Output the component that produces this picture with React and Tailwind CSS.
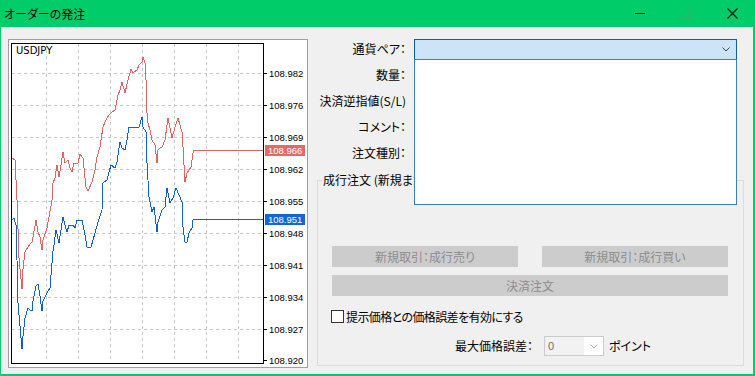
const red = "12,158 15,160 17,200 19,258 21,279 22,289 23,269 25,252 28,247 30,244 32,242 33,237 36,220 38,232 40,237 42,250 43,240 47,228 49,217 52,200 53,183 55,178 57,165 59,177 61,165 63,152 65,163 68,160 70,168 72,172 74,163 78,163 80,154 83,158 86,187 88,191 92,182 95,170 97,157 100,147 103,127 105,122 107,118 110,114 112,112 115,110 118,95 120,90 122,82 125,93 128,80 131,69 133,73 137,70 139,65 142,62 143,57 145,63 146,80 147,113 148,123 150,130 152,140 155,145 157,163 158,150 160,148 162,147 165,140 168,118 172,138 175,127 178,118 180,125 182,132 183,147 184,165 185,182 187,173 189,170 191,167 193,153 193,150 263,150";
const blue = "12,220 14,218 16,225 17,260 18,303 20,326 22,349 23,336 25,318 28,308 30,310 32,311 33,301 36,286 38,284 40,296 42,311 43,301 47,293 50,288 52,263 52,258 54,245 56,230 59,243 61,230 63,217 65,225 67,232 69,225 73,225 75,228 77,220 82,220 83,225 85,235 87,247 91,247 95,233 98,222 102,210 103,183 107,180 109,172 111,165 115,168 117,162 119,148 120,142 122,148 125,150 127,140 129,127 133,128 137,127 139,127 142,117 143,127 146,132 147,163 149,197 150,202 152,212 154,207 157,232 158,222 162,210 165,207 167,188 170,203 173,198 176,188 179,195 182,202 183,227 185,242 187,242 189,233 192,228 193,220 193,219 263,219";

const axis = [
  ["108.982", 73],
  ["108.976", 105],
  ["108.969", 137],
  ["108.962", 169],
  ["108.955", 201],
  ["108.948", 233],
  ["108.941", 265],
  ["108.934", 297],
  ["108.927", 329],
  ["108.920", 360],
];
const hGrid = [73, 105, 137, 169, 201, 233, 265, 297, 329];
const vGrid = [46, 78, 110, 142, 174, 206, 238];

function Chart() {
  return (
    <div className="mt-[3px] w-[300px] h-[329px] shrink-0 bg-white border border-[#a0a0a0]">
      <svg width="298" height="327" viewBox="9 40 298 327" className="block">
        {hGrid.map((y) => (
          <line key={"h" + y} x1="12" x2="262" y1={y + 0.5} y2={y + 0.5} stroke="#c8c8c8" strokeDasharray="3 3" strokeWidth="1" />
        ))}
        {vGrid.map((x) => (
          <line key={"v" + x} x1={x + 0.5} x2={x + 0.5} y1="44" y2="362" stroke="#c8c8c8" strokeDasharray="3 3" strokeWidth="1" />
        ))}
        <rect x="11.5" y="43.5" width="252" height="320" fill="none" stroke="#000" strokeWidth="1" />
        {axis.map(([t, y]) => (
          <line key={"t" + t} x1="264" x2="267" y1={y + 0.5} y2={y + 0.5} stroke="#000" strokeWidth="1" />
        ))}
        <polyline points={red} fill="none" stroke="#e06464" strokeWidth="1" shapeRendering="crispEdges" />
        <polyline points={blue} fill="none" stroke="#1060cc" strokeWidth="1" shapeRendering="crispEdges" />
        {axis.map(([t, y]) => (
          <text key={t} x="269" y={y + 3.5} fontSize="9.5" fontFamily="Liberation Sans, Arial, sans-serif" fill="#000">
            {t}
          </text>
        ))}
        <text x="16" y="54" fontSize="10" fontFamily="DejaVu Sans, sans-serif" fill="#000">USDJPY</text>
        <rect x="265" y="145" width="40" height="11" fill="#e46a6a" />
        <text x="268" y="153.5" fontSize="9.5" fontFamily="Liberation Sans, Arial, sans-serif" fill="#fff">108.966</text>
        <rect x="265" y="214" width="40" height="11" fill="#1266d6" />
        <text x="268" y="222.5" fontSize="9.5" fontFamily="Liberation Sans, Arial, sans-serif" fill="#fff">108.951</text>
      </svg>
    </div>
  );
}

function TitleBar() {
  return (
    <div className="h-[27px] shrink-0 flex items-center justify-between">
      <div className="pl-[4px] text-[12px] leading-none text-black">オーダーの発注</div>
      <div className="flex h-full">
        <div className="w-[46px] h-full flex items-center justify-center">
          <div className="w-[10px] h-px bg-black" />
        </div>
        <div className="w-[46px] h-full flex items-center justify-center">
          <div className="w-[10px] h-[10px] border border-[#2fb36c]" />
        </div>
        <div className="w-[46px] h-full flex items-center justify-center">
          <svg width="11" height="11" viewBox="0 0 11 11">
            <path d="M0.5 0.5 L10.5 10.5 M10.5 0.5 L0.5 10.5" stroke="#000" strokeWidth="1.1" />
          </svg>
        </div>
      </div>
    </div>
  );
}

function Row({ label, children }) {
  return (
    <div className="h-[26px] flex items-center">
      <div className="w-[90px] flex justify-end whitespace-nowrap leading-none">{label}</div>
      <div className="ml-[8px]">{children}</div>
    </div>
  );
}

function Btn({ children, className }) {
  return (
    <div className={"h-[21px] bg-[#cccccc] flex items-center justify-center text-[#8c8c8c] leading-none " + className}>
      {children}
    </div>
  );
}

function RightPanel() {
  return (
    <div className="ml-[8px] w-[428px] flex flex-col">
      <Row label="通貨ペア：">
        <div className="relative w-[323px] h-[21px]">
          <div className="w-full h-full bg-[#cce4f7] border border-[#0a5fa8] flex items-center justify-end pr-[6px]">
            <svg width="8" height="5" viewBox="0 0 8 5">
              <path d="M0.5 0.5 L4 4 L7.5 0.5" fill="none" stroke="#444" strokeWidth="1" />
            </svg>
          </div>
          <div className="absolute left-0 top-[20px] w-[323px] h-[146px] bg-white border border-[#3a7fbf] z-10" />
        </div>
      </Row>
      <Row label="数量：">
        <div className="w-[323px] h-[21px]" />
      </Row>
      <Row label="決済逆指値(S/L)">
        <div className="w-[323px] h-[21px]" />
      </Row>
      <Row label="コメント：">
        <div className="w-[323px] h-[21px]" />
      </Row>
      <Row label="注文種別：">
        <div className="w-[323px] h-[21px]" />
      </Row>
      <fieldset className="mt-[6px] ml-px w-[427px] h-[194px] border border-[#dcdcdc] p-0 m-0">
        <legend className="ml-[4px] px-px text-[12px] leading-[16px] whitespace-nowrap">成行注文 (新規または決済)</legend>
        <div className="px-[14px] pt-[58px] flex flex-col">
          <div className="flex gap-[24px]">
            <Btn className="w-[186px]">新規取引：成行売り</Btn>
            <Btn className="w-[186px]">新規取引：成行買い</Btn>
          </div>
          <Btn className="mt-[8px] w-[396px]">決済注文</Btn>
          <div className="mt-[14px] ml-[-1px] flex items-center h-[13px]">
            <div className="w-[13px] h-[13px] border border-[#333333] bg-white shrink-0" />
            <span className="ml-[2px] leading-none whitespace-nowrap tracking-[-0.6px]">提示価格との価格誤差を有効にする</span>
          </div>
          <div className="mt-[13px] pl-[123px] flex items-center h-[20px]">
            <span className="w-[84px] whitespace-nowrap leading-none">最大価格誤差：</span>
            <div className="ml-[5px] w-[60px] h-[20px] border border-[#cccccc] bg-white flex">
              <div className="w-[39px] h-full bg-[#f2f2f2] flex items-center pl-[3px] text-[#6d6d6d] text-[11px] font-[Liberation_Sans,sans-serif]">0</div>
              <div className="flex-1 flex items-center justify-center">
                <svg width="8" height="5" viewBox="0 0 8 5">
                  <path d="M0.5 0.5 L4 4 L7.5 0.5" fill="none" stroke="#b0b0b0" strokeWidth="1" />
                </svg>
              </div>
            </div>
            <span className="ml-[5px] leading-none whitespace-nowrap">ポイント</span>
          </div>
        </div>
      </fieldset>
    </div>
  );
}

export default function App() {
  return (
    <div className="w-[755px] h-[376px] bg-[#00cc6a] flex flex-col overflow-hidden font-[Noto_Sans_CJK_JP,sans-serif] [font-feature-settings:'palt'] text-[12px] text-black">
      <TitleBar />
      <div className="flex-1 ml-px mr-[2px] mb-[2px] bg-[#f0f0f0] flex items-start pl-[7px] pt-[9px]">
        <Chart />
        <RightPanel />
      </div>
    </div>
  );
}
